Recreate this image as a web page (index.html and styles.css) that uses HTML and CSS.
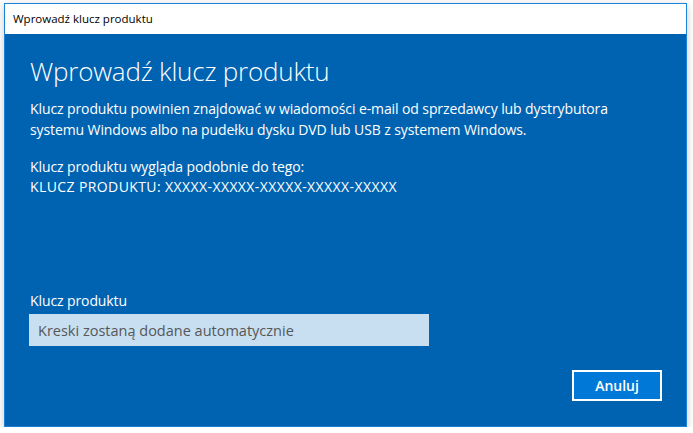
FILE: index.html
```html
<!DOCTYPE html>
<html lang="pl">
<head>
<meta charset="utf-8">
<title>Wprowadź klucz produktu</title>
<link rel="stylesheet" href="styles.css">
</head>
<body>
<div class="window">
  <div class="titlebar">Wprowadź klucz produktu</div>
  <div class="content">
    <h1 class="heading">Wprowadź klucz produktu</h1>
    <p class="text">Klucz produktu powinien znajdować w wiadomości e-mail od sprzedawcy lub dystrybutora<br>systemu Windows albo na pudełku dysku DVD lub USB z systemem Windows.</p>
    <p class="text example">Klucz produktu wygląda podobnie do tego:<br><span class="sample">KLUCZ PRODUKTU: XXXXX-XXXXX-XXXXX-XXXXX-XXXXX</span></p>
    <div class="spacer"></div>
    <label class="label" for="key">Klucz produktu</label>
    <input class="input" id="key" type="text" placeholder="Kreski zostaną dodane automatycznie">
    <div class="actions">
      <button class="button" type="button">Anuluj</button>
    </div>
  </div>
</div>
</body>
</html>
```
FILE: styles.css
```css
html, body {
  margin: 0;
  padding: 0;
  background: #ffffff;
}
body {
  padding: 3px 0 0 4px;
  font-family: "Open Sans", "Noto Sans", sans-serif;
}
.window {
  box-sizing: border-box;
  width: 683px;
  height: 424px;
  border: 1px solid #1c84d8;
  display: flex;
  flex-direction: column;
  box-shadow: 0 2px 8px rgba(0, 0, 0, 0.22);
}
.titlebar {
  height: 30px;
  background: #ffffff;
  color: #000000;
  font-size: 11.5px;
  line-height: 30px;
  padding-left: 8px;
  flex: none;
}
.content {
  flex: 1;
  background: #0063b1;
  color: #ffffff;
  padding: 0 24px 0 25px;
  display: flex;
  flex-direction: column;
}
.heading {
  margin: 20px 0 0 0;
  font-weight: 300;
  font-size: 26px;
  line-height: 34px;
  letter-spacing: -0.2px;
}
.text {
  margin: 10px 0 0 0;
  font-size: 14px;
  line-height: 21px;
  letter-spacing: -0.1px;
}
.example {
  margin-top: 17px;
  line-height: 20px;
}
.sample {
  letter-spacing: 0.4px;
}
.spacer {
  flex: 1;
}
.label {
  font-size: 14px;
  line-height: 20px;
  letter-spacing: -0.1px;
  margin-bottom: 3px;
}
.input {
  box-sizing: border-box;
  width: 400px;
  height: 32px;
  margin: 0 0 0 -1px;
  border: none;
  background: #c7dff1;
  padding: 0 9px;
  font-family: inherit;
  font-size: 14.5px;
  letter-spacing: 0;
  color: #000;
  outline: none;
}
.input::placeholder {
  color: #575757;
  opacity: 1;
}
.actions {
  display: flex;
  justify-content: flex-end;
  margin: 24px 0 25px 0;
}
.button {
  box-sizing: border-box;
  width: 90px;
  height: 31px;
  border: 2px solid #ffffff;
  background: #0078d7;
  color: #ffffff;
  font-family: inherit;
  font-size: 14px;
  font-weight: 600;
}
```
